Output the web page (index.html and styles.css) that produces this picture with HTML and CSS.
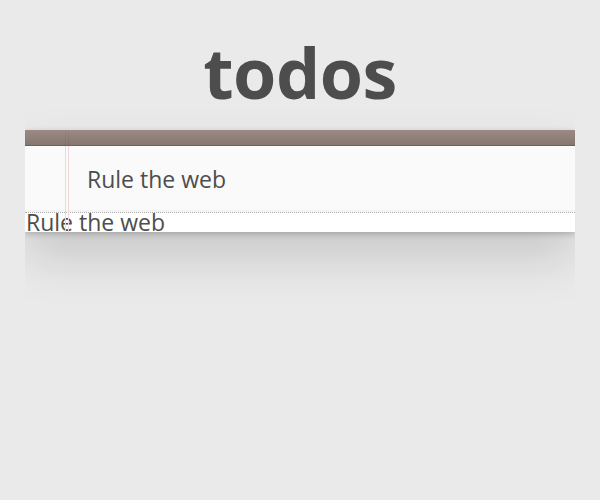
FILE: index.html
```html
<!DOCTYPE html>
<html lang="en">
<head>
<meta charset="utf-8">
<title>todos</title>
<link rel="stylesheet" href="styles.css">
</head>
<body>
<h1 class="title">todos</h1>
<section class="todoapp">
  <header class="app-header">
    <div class="header-bar"></div>
    <input class="new-todo" type="text" value="Rule the web">
  </header>
  <section class="main">
    <ul class="todo-list">
      <li class="todo-item">Rule the web</li>
    </ul>
  </section>
</section>
</body>
</html>
```
FILE: styles.css
```css
html {
  min-height: 100%;
  background: #eaeaea;
}
html, body {
  margin: 0;
  padding: 0;
}
body {
  width: 550px;
  min-height: 500px;
  margin: 0 auto;
  font: 14px "Open Sans", "Noto Sans", sans-serif;
  line-height: 1.4em;
  color: #4d4d4d;
}
.title {
  box-sizing: border-box;
  height: 130px;
  margin: 0;
  padding-top: 32px;
  font-size: 70px;
  line-height: 80px;
  font-weight: bold;
  letter-spacing: -0.5px;
  text-align: center;
  color: #4d4d4d;
}
.todoapp {
  position: relative;
  background: #fff;
  box-shadow: 0 2px 6px 0 rgba(0,0,0,0.2), 0 25px 50px 0 rgba(0,0,0,0.15);
}
.todoapp::before {
  content: "";
  position: absolute;
  top: 0;
  left: 40px;
  width: 2px;
  height: 100%;
  border-left: 1px solid #f5d6d6;
  border-right: 1px solid #f5d6d6;
  z-index: 1;
}
.app-header {
  display: flex;
  flex-direction: column;
}
.header-bar {
  position: relative;
  z-index: 2;
  height: 15px;
  border-bottom: 1px solid #6c615c;
  background: linear-gradient(to bottom, rgba(132,110,100,0.8), rgba(101,84,76,0.8));
}
.new-todo {
  display: block;
  box-sizing: border-box;
  width: 100%;
  margin: 0;
  padding: 16px 16px 16px 62px;
  border: none;
  outline: none;
  font-family: "Open Sans", "Noto Sans", sans-serif;
  font-size: 23px;
  line-height: 33px;
  height: 65.6px;
  color: #4d4d4d;
  background: rgba(0,0,0,0.02);
  box-shadow: inset 0 -2px 1px rgba(0,0,0,0.03);
}
.main {
  border-top: 1px dotted #adadad;
}
.todo-list {
  margin: 0;
  padding: 0;
  list-style: none;
}
.todo-item {
  font-size: 23px;
  line-height: 19px;
  padding-left: 1px;
}
```
